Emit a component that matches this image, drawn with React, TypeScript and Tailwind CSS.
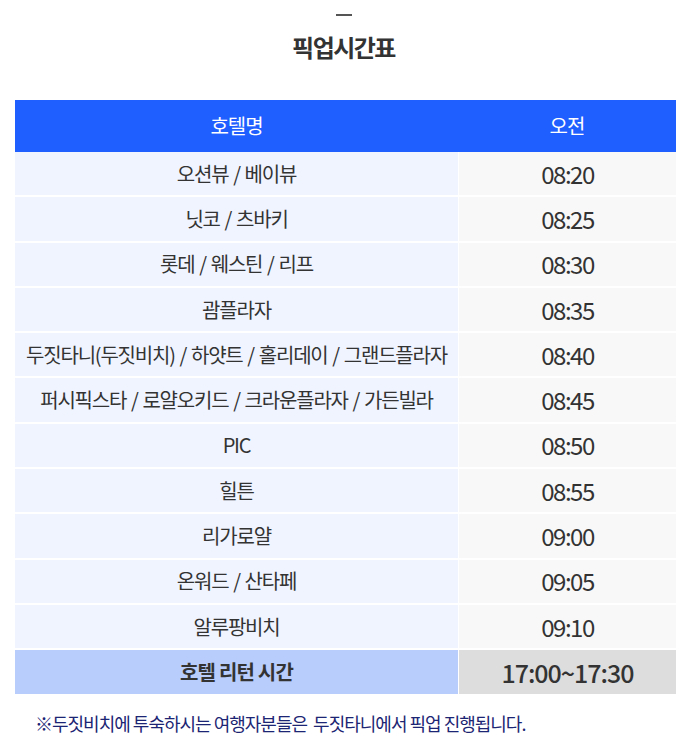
const ROWS = [
  { hotel: '오션뷰 / 베이뷰', time: '08:20' },
  { hotel: '닛코 / 츠바키', time: '08:25' },
  { hotel: '롯데 / 웨스틴 / 리프', time: '08:30' },
  { hotel: '괌플라자', time: '08:35' },
  { hotel: '두짓타니(두짓비치) / 하얏트 / 홀리데이 / 그랜드플라자', time: '08:40' },
  { hotel: '퍼시픽스타 / 로얄오키드 / 크라운플라자 / 가든빌라', time: '08:45' },
  { hotel: 'PIC', time: '08:50' },
  { hotel: '힐튼', time: '08:55' },
  { hotel: '리가로얄', time: '09:00' },
  { hotel: '온워드 / 산타페', time: '09:05' },
  { hotel: '알루팡비치', time: '09:10' },
];

export default function App() {
  return (
    <div
      className="w-[687px] min-h-[738px] bg-white text-[#333]"
      style={{ fontFamily: '"Noto Sans CJK KR", "Noto Sans", sans-serif' }}
    >
      <div className="flex flex-col items-center pt-[14px]">
        <div className="w-[16px] h-[2px] bg-[#555]" />
        <h1 className="mt-[16px] text-[24px] font-bold tracking-[-1.5px] leading-[30px]">픽업시간표</h1>
      </div>

      <div className="mx-[15px] mt-[38px] w-[661px]">
        <div className="flex h-[52px] bg-[#1f5eff] text-white text-[20px] tracking-[-1px]">
          <div className="w-[443px] flex items-center justify-center">호텔명</div>
          <div className="flex-1 flex items-center justify-center">오전</div>
        </div>
        <div className="grid grid-cols-[443px_217px] gap-x-[1px] gap-y-[2px]">
          {ROWS.map((r) => (
            <div key={r.time} className="contents">
              <div className="h-[43.3px] bg-[#f0f4fe] flex items-center justify-center text-[20px] tracking-[-1.2px] [word-spacing:1.5px] whitespace-nowrap">
                {r.hotel}
              </div>
              <div className="h-[43.3px] bg-[#f8f8f8] flex items-center justify-center text-[24px] tracking-[-1.5px]">
                {r.time}
              </div>
            </div>
          ))}
          <div className="h-[44px] bg-[#b8cdfc] flex items-center justify-center text-[20px] font-bold tracking-[-0.8px]">
            호텔 리턴 시간
          </div>
          <div className="h-[44px] bg-[#dddddd] flex items-center justify-center text-[25px] font-medium tracking-[-1px]">
            17:00~17:30
          </div>
        </div>
      </div>

      <p className="mt-[16px] pl-[35px] text-[18px] text-[#1c2573] tracking-[-1px] whitespace-pre">
        ※두짓비치에 투숙하시는 여행자분들은  두짓타니에서 픽업 진행됩니다.
      </p>
    </div>
  );
}
